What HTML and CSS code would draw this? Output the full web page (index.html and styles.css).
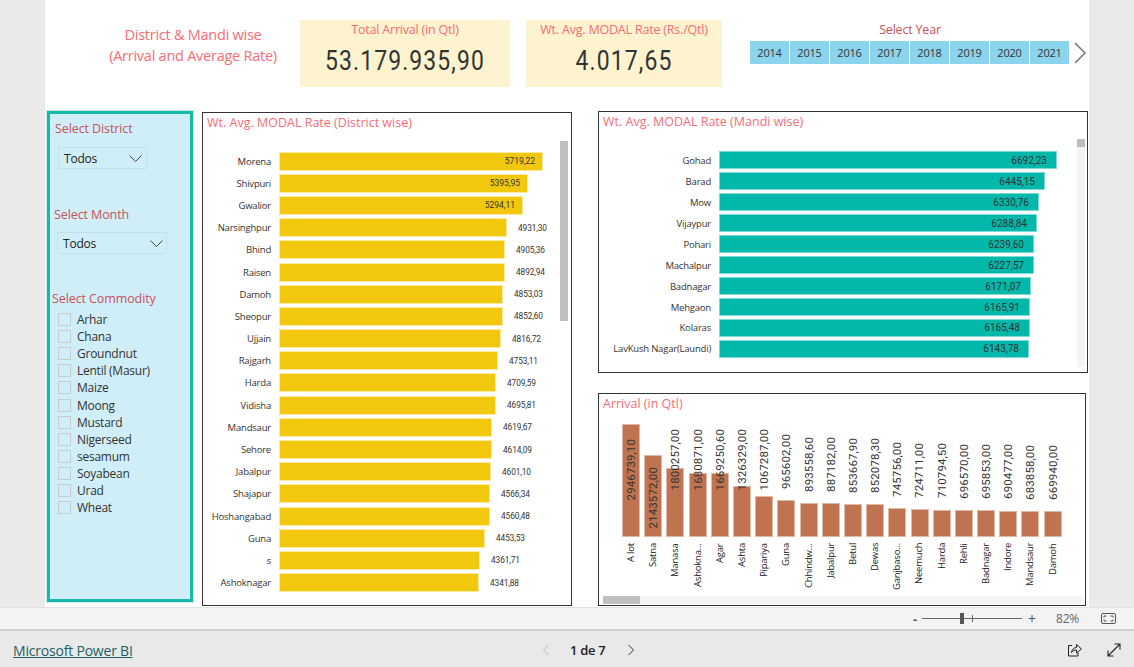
FILE: index.html
```html
<!DOCTYPE html>
<html lang="en">
<head>
    <meta charset="UTF-8">
    <title>District and Mandi wise report</title>
    <link rel="stylesheet" href="styles.css">
</head>
<body>
    <div class="viewer">
        <div class="canvas">
            <div class="top-row">
                <div class="report-title">District &amp; Mandi wise<br>(Arrival and Average Rate)</div>
                <div class="card card-arrival">
                    <div class="card-label">Total Arrival (in Qtl)</div>
                    <div class="card-value">53.179.935,90</div>
                </div>
                <div class="card card-rate">
                    <div class="card-label">Wt. Avg. MODAL Rate (Rs./Qtl)</div>
                    <div class="card-value">4.017,65</div>
                </div>
                <div class="year-slicer">
                    <div class="year-label">Select Year</div>
                    <div class="year-tiles">
                        <span class="year-tile">2014</span>
                        <span class="year-tile">2015</span>
                        <span class="year-tile">2016</span>
                        <span class="year-tile">2017</span>
                        <span class="year-tile">2018</span>
                        <span class="year-tile">2019</span>
                        <span class="year-tile">2020</span>
                        <span class="year-tile">2021</span>
                        <svg class="year-next" width="14" height="22" viewBox="0 0 14 22"><path d="M2 1l10 10L2 21" fill="none" stroke="#777" stroke-width="1.5"/></svg>
                    </div>
                </div>
            </div>

            <div class="main-row">
                <div class="filters">
                    <div class="filter-title filter-district">Select District</div>
                    <div class="dropdown dropdown-district">
                        <span>Todos</span>
                        <svg width="13" height="7" viewBox="0 0 13 7"><path d="M.5.5l6 6 6-6" fill="none" stroke="#444"/></svg>
                    </div>
                    <div class="filter-title filter-month">Select Month</div>
                    <div class="dropdown dropdown-month">
                        <span>Todos</span>
                        <svg width="13" height="7" viewBox="0 0 13 7"><path d="M.5.5l6 6 6-6" fill="none" stroke="#444"/></svg>
                    </div>
                    <div class="filter-title filter-commodity">Select Commodity</div>
                    <ul class="commodity-list">
                        <li><span class="check"></span>Arhar</li>
                        <li><span class="check"></span>Chana</li>
                        <li><span class="check"></span>Groundnut</li>
                        <li><span class="check"></span>Lentil (Masur)</li>
                        <li><span class="check"></span>Maize</li>
                        <li><span class="check"></span>Moong</li>
                        <li><span class="check"></span>Mustard</li>
                        <li><span class="check"></span>Nigerseed</li>
                        <li><span class="check"></span>sesamum</li>
                        <li><span class="check"></span>Soyabean</li>
                        <li><span class="check"></span>Urad</li>
                        <li><span class="check"></span>Wheat</li>
                    </ul>
                </div>

                <div class="chart chart-district">
                    <div class="chart-title">Wt. Avg. MODAL Rate (District wise)</div>
                    <div class="rows">
                        <div class="row"><span class="row-label">Morena</span><span class="bar" style="width:264px"><span class="val">5719,22</span></span></div>
                        <div class="row"><span class="row-label">Shivpuri</span><span class="bar" style="width:249px"><span class="val">5395,95</span></span></div>
                        <div class="row"><span class="row-label">Gwalior</span><span class="bar" style="width:244px"><span class="val">5294,11</span></span></div>
                        <div class="row"><span class="row-label">Narsinghpur</span><span class="bar" style="width:228px"></span><span class="val-out">4931,30</span></div>
                        <div class="row"><span class="row-label">Bhind</span><span class="bar" style="width:226px"></span><span class="val-out">4905,36</span></div>
                        <div class="row"><span class="row-label">Raisen</span><span class="bar" style="width:226px"></span><span class="val-out">4892,94</span></div>
                        <div class="row"><span class="row-label">Damoh</span><span class="bar" style="width:224px"></span><span class="val-out">4853,03</span></div>
                        <div class="row"><span class="row-label">Sheopur</span><span class="bar" style="width:224px"></span><span class="val-out">4852,60</span></div>
                        <div class="row"><span class="row-label">Ujjain</span><span class="bar" style="width:222px"></span><span class="val-out">4816,72</span></div>
                        <div class="row"><span class="row-label">Rajgarh</span><span class="bar" style="width:219px"></span><span class="val-out">4753,11</span></div>
                        <div class="row"><span class="row-label">Harda</span><span class="bar" style="width:217px"></span><span class="val-out">4709,59</span></div>
                        <div class="row"><span class="row-label">Vidisha</span><span class="bar" style="width:217px"></span><span class="val-out">4695,81</span></div>
                        <div class="row"><span class="row-label">Mandsaur</span><span class="bar" style="width:213px"></span><span class="val-out">4619,67</span></div>
                        <div class="row"><span class="row-label">Sehore</span><span class="bar" style="width:213px"></span><span class="val-out">4614,09</span></div>
                        <div class="row"><span class="row-label">Jabalpur</span><span class="bar" style="width:212px"></span><span class="val-out">4601,10</span></div>
                        <div class="row"><span class="row-label">Shajapur</span><span class="bar" style="width:211px"></span><span class="val-out">4566,34</span></div>
                        <div class="row"><span class="row-label">Hoshangabad</span><span class="bar" style="width:211px"></span><span class="val-out">4560,48</span></div>
                        <div class="row"><span class="row-label">Guna</span><span class="bar" style="width:206px"></span><span class="val-out">4453,53</span></div>
                        <div class="row"><span class="row-label">s</span><span class="bar" style="width:201px"></span><span class="val-out">4361,71</span></div>
                        <div class="row"><span class="row-label">Ashoknagar</span><span class="bar" style="width:200px"></span><span class="val-out">4341,88</span></div>
                    </div>
                    <div class="scroll-v scroll-district"></div>
                </div>

                <div class="right-col">
                    <div class="chart chart-mandi">
                        <div class="chart-title">Wt. Avg. MODAL Rate (Mandi wise)</div>
                        <div class="rows">
                            <div class="row"><span class="row-label">Gohad</span><span class="bar" style="width:338px"><span class="val">6692,23</span></span></div>
                            <div class="row"><span class="row-label">Barad</span><span class="bar" style="width:326px"><span class="val">6445,15</span></span></div>
                            <div class="row"><span class="row-label">Mow</span><span class="bar" style="width:320px"><span class="val">6330,76</span></span></div>
                            <div class="row"><span class="row-label">Vijaypur</span><span class="bar" style="width:318px"><span class="val">6288,84</span></span></div>
                            <div class="row"><span class="row-label">Pohari</span><span class="bar" style="width:315px"><span class="val">6239,60</span></span></div>
                            <div class="row"><span class="row-label">Machalpur</span><span class="bar" style="width:315px"><span class="val">6227,57</span></span></div>
                            <div class="row"><span class="row-label">Badnagar</span><span class="bar" style="width:312px"><span class="val">6171,07</span></span></div>
                            <div class="row"><span class="row-label">Mehgaon</span><span class="bar" style="width:311px"><span class="val">6165,91</span></span></div>
                            <div class="row"><span class="row-label">Kolaras</span><span class="bar" style="width:311px"><span class="val">6165,48</span></span></div>
                            <div class="row"><span class="row-label">LavKush Nagar(Laundi)</span><span class="bar" style="width:310px"><span class="val">6143,78</span></span></div>
                        </div>
                        <div class="scroll-v scroll-mandi"><div class="thumb-v"></div></div>
                    </div>

                    <div class="chart chart-arrival">
                        <div class="chart-title">Arrival (in Qtl)</div>
                        <div class="columns">
                            <div class="col"><div class="plot"><span class="col-bar" style="height:113px"></span><span class="col-val" style="bottom:37px">2946739,10</span></div><div class="col-label">A lot</div></div>
                            <div class="col"><div class="plot"><span class="col-bar" style="height:82px"></span><span class="col-val" style="bottom:9px">2143572,00</span></div><div class="col-label">Satna</div></div>
                            <div class="col"><div class="plot"><span class="col-bar" style="height:69px"></span><span class="col-val" style="bottom:47px">1800257,00</span></div><div class="col-label">Manasa</div></div>
                            <div class="col"><div class="plot"><span class="col-bar" style="height:64px"></span><span class="col-val" style="bottom:47px">1680871,00</span></div><div class="col-label">Ashokna...</div></div>
                            <div class="col"><div class="plot"><span class="col-bar" style="height:64px"></span><span class="col-val" style="bottom:47px">1669250,60</span></div><div class="col-label">Agar</div></div>
                            <div class="col"><div class="plot"><span class="col-bar" style="height:51px"></span><span class="col-val" style="bottom:47px">1326329,00</span></div><div class="col-label">Ashta</div></div>
                            <div class="col"><div class="plot"><span class="col-bar" style="height:41px"></span><span class="col-val" style="bottom:47px">1067287,00</span></div><div class="col-label">Pipariya</div></div>
                            <div class="col"><div class="plot"><span class="col-bar" style="height:37px"></span><span class="col-val" style="bottom:48px">965602,00</span></div><div class="col-label">Guna</div></div>
                            <div class="col"><div class="plot"><span class="col-bar" style="height:34px"></span><span class="col-val" style="bottom:45px">893558,60</span></div><div class="col-label">Chhindw...</div></div>
                            <div class="col"><div class="plot"><span class="col-bar" style="height:34px"></span><span class="col-val" style="bottom:45px">887182,00</span></div><div class="col-label">Jabalpur</div></div>
                            <div class="col"><div class="plot"><span class="col-bar" style="height:33px"></span><span class="col-val" style="bottom:44px">853667,90</span></div><div class="col-label">Betul</div></div>
                            <div class="col"><div class="plot"><span class="col-bar" style="height:33px"></span><span class="col-val" style="bottom:44px">852078,30</span></div><div class="col-label">Dewas</div></div>
                            <div class="col"><div class="plot"><span class="col-bar" style="height:29px"></span><span class="col-val" style="bottom:40px">745756,00</span></div><div class="col-label">Ganjbaso...</div></div>
                            <div class="col"><div class="plot"><span class="col-bar" style="height:28px"></span><span class="col-val" style="bottom:39px">724711,00</span></div><div class="col-label">Neemuch</div></div>
                            <div class="col"><div class="plot"><span class="col-bar" style="height:27px"></span><span class="col-val" style="bottom:39px">710794,50</span></div><div class="col-label">Harda</div></div>
                            <div class="col"><div class="plot"><span class="col-bar" style="height:27px"></span><span class="col-val" style="bottom:38px">696570,00</span></div><div class="col-label">Rehli</div></div>
                            <div class="col"><div class="plot"><span class="col-bar" style="height:27px"></span><span class="col-val" style="bottom:38px">695853,00</span></div><div class="col-label">Badnagar</div></div>
                            <div class="col"><div class="plot"><span class="col-bar" style="height:26px"></span><span class="col-val" style="bottom:38px">690477,00</span></div><div class="col-label">Indore</div></div>
                            <div class="col"><div class="plot"><span class="col-bar" style="height:26px"></span><span class="col-val" style="bottom:37px">683858,00</span></div><div class="col-label">Mandsaur</div></div>
                            <div class="col"><div class="plot"><span class="col-bar" style="height:26px"></span><span class="col-val" style="bottom:37px">669940,00</span></div><div class="col-label">Damoh</div></div>
                        </div>
                        <div class="scroll-h"><div class="thumb-h"></div></div>
                    </div>
                </div>
            </div>
        </div>
    </div>

    <div class="zoom-bar">
        <span class="zoom-minus">-</span>
        <div class="zoom-track"><span class="zoom-tick"></span><span class="zoom-thumb"></span></div>
        <span class="zoom-plus">+</span>
        <span class="zoom-pct">82%</span>
        <svg class="zoom-fit" width="15" height="11" viewBox="0 0 15 11"><rect x=".5" y=".5" width="14" height="10" rx="1.5" fill="none" stroke="#555"/><path d="M3 4.500V3h2.500M12 4.500V3H9.500M3 6.500V8h2.500M12 6.500V8H9.500" fill="none" stroke="#555"/></svg>
    </div>

    <div class="footer">
        <a class="brand" href="#">Microsoft Power BI</a>
        <div class="pager">
            <svg width="8" height="12" viewBox="0 0 8 12"><path d="M6.500 1l-5 5 5 5" fill="none" stroke="#bbb"/></svg>
            <span class="page-num">1 de 7</span>
            <svg width="8" height="12" viewBox="0 0 8 12"><path d="M1.500 1l5 5-5 5" fill="none" stroke="#333"/></svg>
        </div>
        <div class="footer-actions">
            <svg width="15" height="14" viewBox="0 0 15 14"><path d="M5 2.500H1.500v10.500h9.500V9.500" fill="none" stroke="#222"/><path d="M4.500 9.500C5 6 7.500 4.500 9.500 4.500V1.500l5 4.500-5 4v-3c-2 0-4 .8-5 2.500z" fill="none" stroke="#222"/></svg>
            <svg width="14" height="14" viewBox="0 0 14 14"><path d="M1 13L13 1M7.500 1H13v5.500M1 7.500V13h5.500" fill="none" stroke="#222" stroke-width="1.100"/></svg>
        </div>
    </div>
</body>
</html>
```

FILE: styles.css
```css
* {
    margin: 0;
    padding: 0;
    box-sizing: border-box;
}

body {
    width: 1134px;
    height: 667px;
    overflow: hidden;
    background-color: #eaeaea;
    font-family: "Open Sans", sans-serif;
    color: #222;
}

.viewer {
    height: 607px;
    padding-left: 45px;
}

.canvas {
    width: 1044px;
    height: 607px;
    background-color: #fff;
}

/* header row */
.top-row {
    display: flex;
    height: 111px;
    padding-top: 20px;
}

.report-title {
    width: 255px;
    padding: 4px 0 0 41px;
    font-size: 14.500px;
    line-height: 21px;
    letter-spacing: -0.25px;
    text-align: center;
    white-space: nowrap;
    color: #fd6b75;
}

.card {
    height: 67px;
    background-color: #fdf3cf;
    text-align: center;
}

.card-arrival {
    width: 210px;
}

.card-rate {
    width: 196px;
    margin-left: 16px;
}

.card-label {
    padding-top: 1px;
    font-size: 12.500px;
    line-height: 18px;
    letter-spacing: -0.2px;
    color: #fd6b75;
}

/* Roboto squeezed a bit, the report's number font is narrower */
.card-value {
    margin-top: 5px;
    font-family: Roboto, sans-serif;
    font-size: 27px;
    line-height: 34px;
    letter-spacing: 1.300px;
    color: #333;
    transform: scaleX(0.85);
}

.year-slicer {
    width: 338px;
    margin-left: 28px;
}

.year-label {
    width: 320px;
    padding-top: 1px;
    font-size: 12.500px;
    line-height: 18px;
    letter-spacing: -0.2px;
    text-align: center;
    color: #c9505a;
}

.year-tiles {
    display: flex;
    align-items: center;
    gap: 1px;
    margin-top: 2px;
}

.year-tile {
    width: 39px;
    height: 23px;
    background-color: #8bd4ee;
    font-size: 11px;
    line-height: 24px;
    letter-spacing: -0.2px;
    text-align: center;
    color: #333;
}

.year-next {
    margin-left: 3px;
}

/* main row */
.main-row {
    display: flex;
    align-items: flex-start;
    padding-left: 2px;
}

.filters {
    width: 146px;
    height: 491px;
    background-color: #d0eef8;
    border: 3px solid #16b8aa;
    box-shadow: 0 0 0 1px #cfe9e6;
}

.filter-title {
    font-size: 12.500px;
    line-height: 18px;
    letter-spacing: -0.1px;
    color: #c9505a;
}

.filter-district {
    margin: 6px 0 0 5px;
}

.filter-month {
    margin: 37px 0 0 4px;
}

.filter-commodity {
    margin: 36px 0 0 2px;
}

.dropdown {
    display: flex;
    align-items: center;
    justify-content: space-between;
    height: 22px;
    border: 1px solid #c5e0ea;
    font-size: 12px;
    letter-spacing: -0.2px;
}

.dropdown-district {
    width: 89px;
    margin: 9px 0 0 8px;
    padding: 0 4px 0 5px;
}

.dropdown-month {
    width: 110px;
    margin: 8px 0 0 7px;
    padding: 0 3px 0 5px;
}

.commodity-list {
    list-style: none;
    margin: 3px 0 0 8px;
}

.commodity-list li {
    display: flex;
    align-items: center;
    height: 17.100px;
    font-size: 12px;
    letter-spacing: -0.25px;
    color: #333;
}

.check {
    width: 13px;
    height: 13px;
    margin-right: 6px;
    border: 1px solid #c4ccd0;
}

/* chart boxes */
.chart {
    position: relative;
    background-color: #fff;
    border: 1px solid #333;
}

.chart-title {
    height: 20px;
    padding-left: 4px;
    font-size: 12.500px;
    line-height: 20px;
    color: #fd6b75;
}

.chart-district {
    width: 370px;
    height: 494px;
    margin: 1px 0 0 9px;
}

.chart-district .rows {
    padding-top: 17px;
}

.chart-district .row {
    height: 22.200px;
}

.chart-district .row-label {
    width: 68px;
}

.chart-district .bar {
    height: 19px;
    background-color: #f2c80f;
    border-color: #fbe9a0;
}

.right-col {
    margin-left: 26px;
}

.chart-mandi {
    width: 490px;
    height: 262px;
}

.chart-mandi .rows {
    padding-top: 18px;
}

.chart-mandi .row {
    height: 20.950px;
}

.chart-mandi .row-label {
    width: 112px;
}

.chart-mandi .bar {
    height: 18px;
    background-color: #01b8aa;
    border-color: #7adcd4;
}

.chart-mandi .val {
    padding-right: 9px;
    font-size: 10px;
}

.row {
    display: flex;
    align-items: center;
}

.row-label {
    margin-right: 8px;
    font-size: 9.500px;
    letter-spacing: -0.2px;
    text-align: right;
    white-space: nowrap;
    color: #333;
}

.bar {
    display: flex;
    align-items: center;
    justify-content: flex-end;
    border: 1px solid;
}

.val {
    padding-right: 7px;
    font-family: Roboto, sans-serif;
    font-size: 8.500px;
    color: #333;
}

.val-out {
    margin-left: 11px;
    font-family: Roboto, sans-serif;
    font-size: 8.300px;
    letter-spacing: -0.1px;
    color: #333;
}

.scroll-v {
    position: absolute;
    width: 8px;
    background-color: #c0c0c0;
}

.scroll-district {
    top: 28px;
    left: 357px;
    height: 180px;
}

.scroll-mandi {
    top: 27px;
    left: 478px;
    height: 228px;
    background-color: #f4f4f4;
}

.thumb-v {
    height: 8px;
    background-color: #bdbdbd;
}

/* arrival chart */
.chart-arrival {
    width: 488px;
    height: 213px;
    margin-top: 20px;
}

.columns {
    display: flex;
    padding: 10px 0 0 21px;
}

.col {
    width: 22.200px;
}

.plot {
    position: relative;
    display: flex;
    align-items: flex-end;
    justify-content: center;
    height: 113px;
}

.col-bar {
    width: 18px;
    background-color: #bf7350;
    border: 1px solid #dfb8a6;
}

.col-val {
    position: absolute;
    left: 0;
    width: 100%;
    writing-mode: vertical-rl;
    transform: rotate(180deg);
    font-family: Roboto, sans-serif;
    font-size: 11.500px;
    line-height: 22px;
    letter-spacing: 0.100px;
    white-space: nowrap;
    color: #333;
}

.col-label {
    height: 48px;
    margin-top: 6px;
    writing-mode: vertical-rl;
    transform: rotate(180deg);
    font-size: 9.500px;
    line-height: 22px;
    letter-spacing: -0.2px;
    text-align: end;
    white-space: nowrap;
    color: #222;
}

.scroll-h {
    position: absolute;
    left: 4px;
    bottom: 1px;
    width: 480px;
    height: 8px;
    background-color: #f4f4f4;
}

.thumb-h {
    width: 37px;
    height: 8px;
    background-color: #c0c0c0;
}

/* zoom bar */
.zoom-bar {
    display: flex;
    align-items: center;
    height: 24px;
    padding-left: 913px;
    background-color: #f3f3f3;
    border-top: 1px solid #e2e2e2;
    border-bottom: 2px solid #cfcfcf;
    color: #555;
}

.zoom-minus {
    width: 9px;
    font-size: 13px;
    font-weight: 700;
}

.zoom-track {
    position: relative;
    width: 100px;
    height: 1px;
    background-color: #666;
}

.zoom-tick {
    position: absolute;
    left: 50px;
    top: -3px;
    width: 1px;
    height: 7px;
    background-color: #666;
}

.zoom-thumb {
    position: absolute;
    left: 38px;
    top: -5px;
    width: 4px;
    height: 11px;
    background-color: #555;
}

.zoom-plus {
    margin-left: 6px;
    font-size: 14px;
}

.zoom-pct {
    margin-left: 20px;
    font-size: 12px;
    letter-spacing: -0.2px;
    color: #666;
}

.zoom-fit {
    margin-left: 22px;
}

/* footer */
.footer {
    display: flex;
    align-items: center;
    height: 36px;
    padding: 2px 0 0 13px;
    background-color: #e9e9e9;
}

.brand {
    width: 120px;
    font-size: 14px;
    letter-spacing: -0.2px;
    white-space: nowrap;
    color: #1d5f66;
}

.pager {
    display: flex;
    align-items: center;
    margin-left: 409px;
}

.page-num {
    margin: 0 22px 0 20px;
    font-size: 13px;
    font-weight: 600;
    letter-spacing: -0.3px;
    color: #222;
}

.footer-actions {
    display: flex;
    align-items: center;
    gap: 25px;
    margin-left: auto;
    padding-right: 13px;
}
```
